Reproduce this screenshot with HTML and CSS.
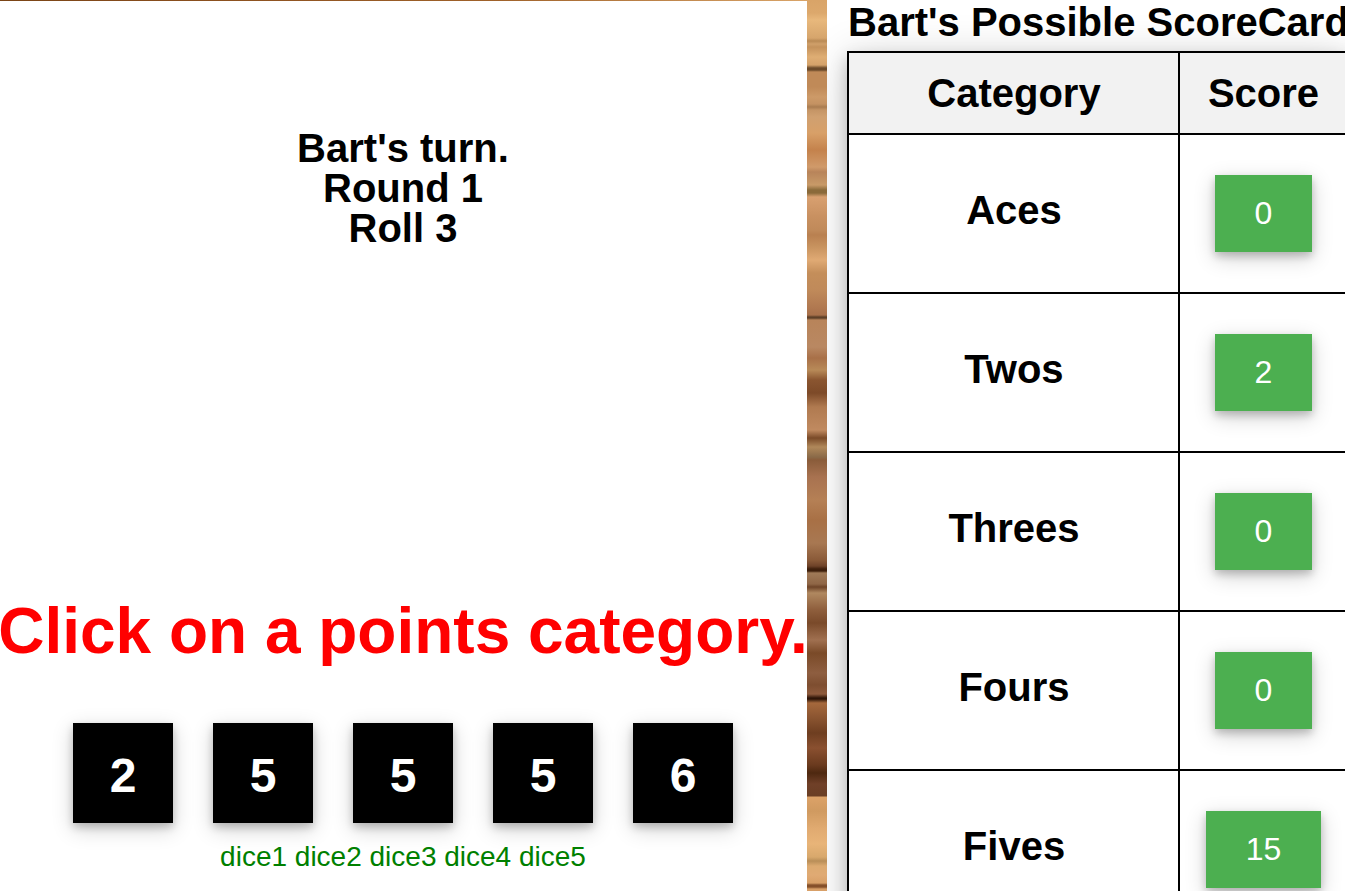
FILE: index.html
```html
<!DOCTYPE html>
<html lang="en">
<head>
<meta charset="utf-8">
<title>Yahtzee</title>
<link rel="stylesheet" href="styles.css">
</head>
<body>
<main class="game">
  <section class="play">
    <h2 class="status">Bart's turn.<br>Round 1<br>Roll 3</h2>
    <h1 class="prompt">Click on a points category.</h1>
    <div class="dice">
      <div class="die">2</div>
      <div class="die">5</div>
      <div class="die">5</div>
      <div class="die">5</div>
      <div class="die">6</div>
    </div>
    <p class="labels">dice1 dice2 dice3 dice4 dice5</p>
  </section>
  <section class="card">
    <h2 class="card-title">Bart's Possible ScoreCard</h2>
    <table class="scores">
      <thead><tr><th class="col-cat">Category</th><th class="col-score">Score</th></tr></thead>
      <tbody>
        <tr><td class="cat">Aces</td><td><button class="pick">0</button></td></tr>
        <tr><td class="cat">Twos</td><td><button class="pick">2</button></td></tr>
        <tr><td class="cat">Threes</td><td><button class="pick">0</button></td></tr>
        <tr><td class="cat">Fours</td><td><button class="pick">0</button></td></tr>
        <tr><td class="cat">Fives</td><td><button class="pick">15</button></td></tr>
      </tbody>
    </table>
  </section>
</main>
</body>
</html>
```
FILE: styles.css
```css
html, body { margin: 0; height: 100%; overflow: hidden; }
body {
  font-family: "Liberation Sans", Arial, sans-serif;
  background-color: #c98f5c;
  background-image:
    linear-gradient(90deg, #7a4416 0, #8a4f1e 200px, #a0622a 500px, #d9a468 807px),
    linear-gradient(180deg,
      #d9a468 0, #dca86c 13px, #e8b87c 20px, #d6a56c 38px, #b98a55 41px, #d0a06a 44px, #c4925c 47px, #dfae74 57px, #d4a26a 65px,
      #6b4a2a 68px, #6b4a2a 70px, #c08a58 72px, #c08a58 87px, #cd9a68 97px, #c49262 104px, #a97c50 107px, #c59566 110px, #d0a070 117px,
      #d8a068 133px, #c4824c 150px, #d09a6a 167px, #b8845a 172px, #c89a68 185px, #8a6a3a 190px, #8a6a3a 193px, #d8a070 197px, #c89060 217px, #c08a5a 230px,
      #b98050 235px, #c8935f 247px, #e0aa74 260px, #c48e5a 273px, #c08a5a 290px, #b07850 308px, #a8704a 315px,
      #5e4028 317px, #5e4028 318px, #b8845a 320px, #b98862 347px, #a87048 358px, #b88a58 370px, #8a5530 380px, #7d4a28 393px, #b07a50 407px, #c08a60 430px,
      #7a4a28 438px, #b0885a 447px, #8a6a48 457px, #8a5c3a 460px, #a87250 477px, #b58055 500px, #a87045 520px, #a87852 543px, #8a5a38 560px, #6e4228 566px,
      #3e1f0c 569px, #3e1f0c 571px, #a07a58 573px, #8f6646 584px, #6e4428 587px, #b08860 593px, #8e5e3c 610px, #7a4a2a 623px, #a07050 640px, #7a4a28 653px, #8e5e40 673px, #7e4e30 685px, #8e5a3c 694px,
      #2e1508 698px, #2e1508 699px, #a5683c 703px, #8a5430 718px, #6e3e20 733px, #8a5030 748px, #6a3a1e 765px, #4e2810 773px, #704028 784px, #6a3e24 796px,
      #dca268 797px, #d09a60 811px, #e0aa70 828px, #e8b478 844px, #d8a86c 857px, #b98e58 861px, #dcaa70 866px, #e0aa74 875px, #d8a068 883px,
      #85502a 885px, #85502a 887px, #d8a068 889px, #d8a068 891px);
  background-repeat: no-repeat;
  background-size: 100% 1px, 100% 891px;
}
.game { display: flex; height: 891px; }
.play {
  width: 806px; flex: none; margin-top: 1px; padding-right: 1px; background: #fff;
  display: flex; flex-direction: column; align-items: center;
}
.status {
  margin: 127px 0 0; font-size: 40px; line-height: 40px; font-weight: 700;
  text-align: center; color: #000; width: 806px;
}
.prompt {
  margin: 346px 0 0; font-size: 64px; line-height: 74px; font-weight: 700;
  color: #f00; white-space: nowrap; text-align: center;
}
.dice { display: flex; gap: 40px; margin-top: 55px; }
.die {
  box-sizing: border-box; width: 100px; height: 100px; padding-top: 5px; background: #000; color: #fff;
  font-size: 48px; font-weight: 700; display: flex; align-items: center; justify-content: center;
  box-shadow: 0 4px 8px rgba(0,0,0,.2), 0 6px 20px rgba(0,0,0,.19);
}
.labels { margin: 18px 0 0; font-size: 28px; line-height: 32px; color: #008000; }
.card {
  margin-left: 20px; flex: 1; min-width: 0; background: #fff; overflow: hidden; padding-left: 20px;
}
.card-title { margin: 0 0 0 1px; font-size: 40px; line-height: 44px; padding-bottom: 7px; font-weight: 700; white-space: nowrap; color: #000; }
.scores {
  border-collapse: collapse; width: 502px; table-layout: fixed; font-size: 40px; font-weight: 700;
  box-shadow: 0 8px 16px rgba(0,0,0,.2), 0 6px 40px rgba(0,0,0,.19);
}
.scores th, .scores td { border: 2px solid #000; text-align: center; padding: 0; }
.scores th { background: #f2f2f2; height: 80px; }
.scores th.col-cat { padding-left: 1px; }
.scores td { height: 157px; }
.scores td.cat { padding: 0 0 7px 1px; height: 150px; }
.col-cat { width: 328px; }
.pick {
  border: 0; background: #4caf50; color: #fff; font: 400 32px "Liberation Sans", Arial, sans-serif;
  height: 77px; padding: 0 40px 1px;
  box-shadow: 0 4px 8px rgba(0,0,0,.2), 0 6px 20px rgba(0,0,0,.19);
}
```
